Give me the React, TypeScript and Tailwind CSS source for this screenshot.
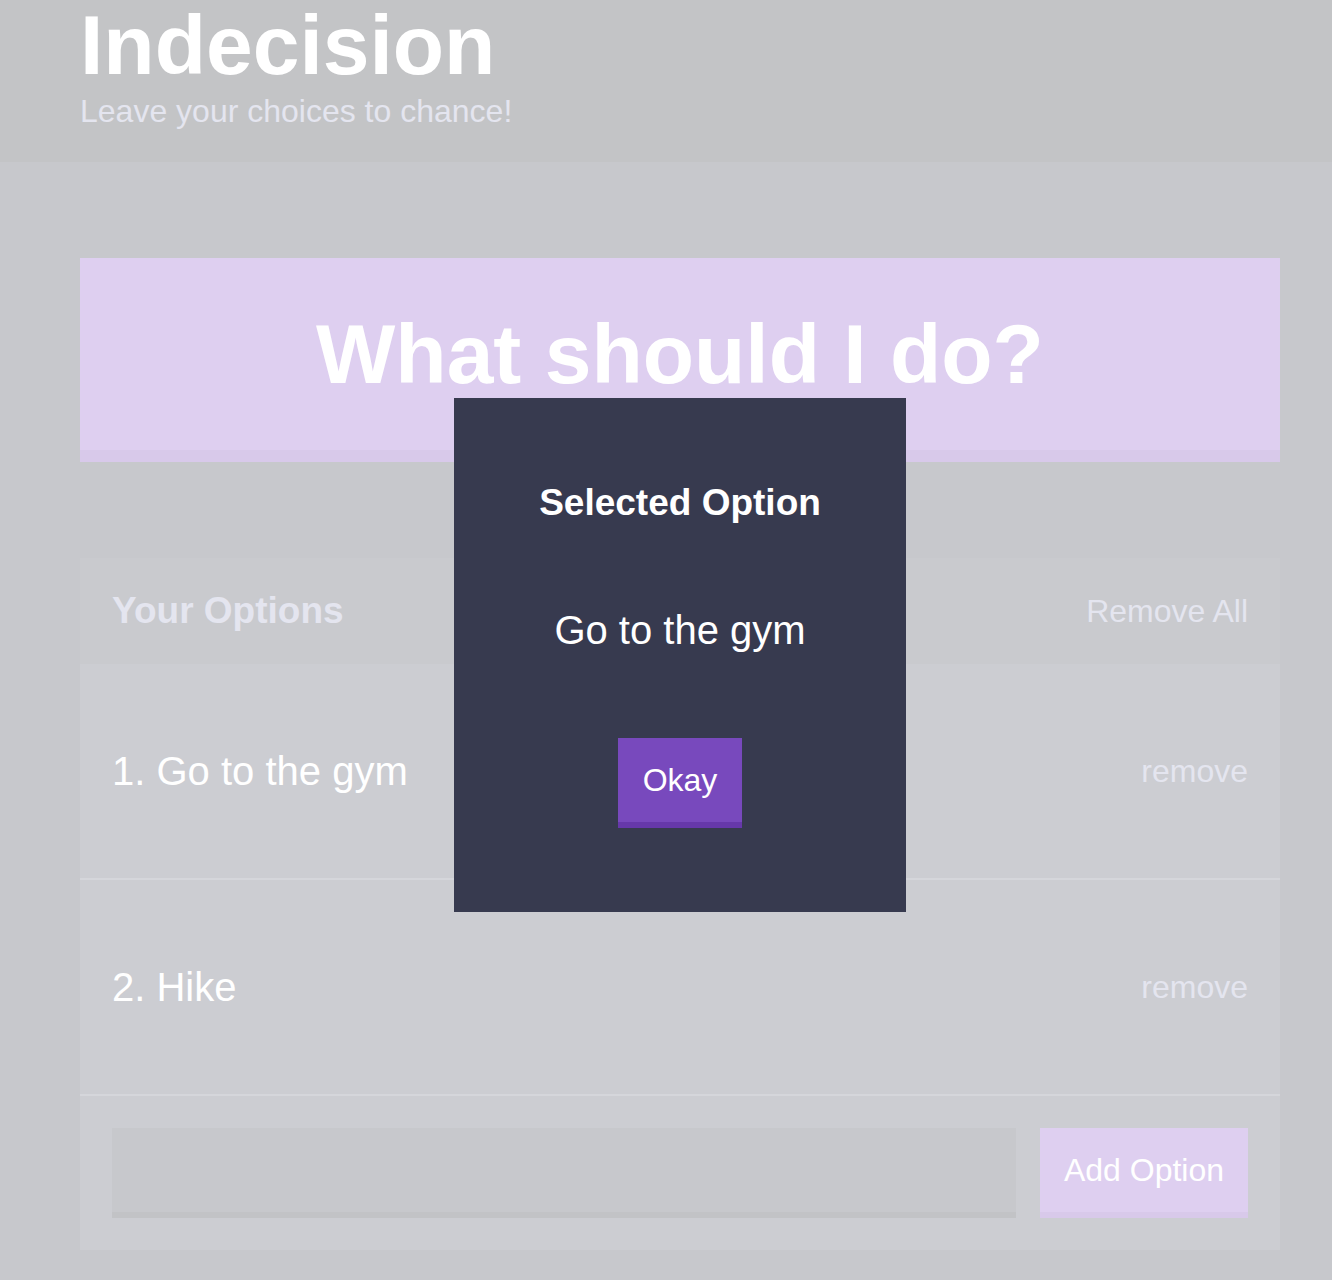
import React from "react";

export default function App() {
  return (
    <div className="relative min-h-[1280px] bg-[#c7c8cc] font-['Liberation_Sans',Arial,Helvetica,sans-serif]">
      <header className="h-[162px] bg-[#c3c4c6] px-[80px] pt-[3px]">
        <h1 className="text-[84px] leading-[84px] font-bold text-white">Indecision</h1>
        <h2 className="mt-[8px] text-[32px] leading-[32px] text-[#e4e5ef]">Leave your choices to chance!</h2>
      </header>
      <main className="ml-[80px] w-[1200px] pt-[96px]">
        <button className="block w-full h-[204px] bg-[#decff0] border-b-[12px] border-[#d8c9ea] text-white text-[84px] leading-[84px] font-bold">
          What should I do?
        </button>
        <div className="mt-[96px] bg-[#cccdd2]">
          <div className="h-[106px] bg-[#c9cace] flex items-center justify-between px-[32px]">
            <h3 className="text-[37px] font-bold text-[#e4e5ef]">Your Options</h3>
            <button className="text-[32px] text-[#e4e5ef]">Remove All</button>
          </div>
          <div className="h-[216px] border-b-[2px] border-[#d5d6db] flex items-center justify-between px-[32px]">
            <p className="text-[40px] text-white">1. Go to the gym</p>
            <button className="text-[32px] text-[#e4e5ef]">remove</button>
          </div>
          <div className="h-[216px] border-b-[2px] border-[#d5d6db] flex items-center justify-between px-[32px]">
            <p className="text-[40px] text-white">2. Hike</p>
            <button className="text-[32px] text-[#e4e5ef]">remove</button>
          </div>
          <form className="flex gap-[24px] p-[32px]">
            <input className="flex-1 h-[90px] bg-[#c7c8cc] border-b-[6px] border-[#c2c3c6] outline-none" />
            <button type="button" className="w-[208px] h-[90px] bg-[#decff0] border-b-[6px] border-[#d8c9ea] text-white text-[32px]">
              Add Option
            </button>
          </form>
        </div>
      </main>
      <div className="absolute left-[454px] top-[398px] w-[452px] h-[514px] bg-[#373a4f] flex flex-col items-center pt-[83px]">
        <h3 className="text-[37px] leading-[44px] font-bold text-white">Selected Option</h3>
        <p className="mt-[81px] text-[40px] leading-[48px] text-white">Go to the gym</p>
        <button className="mt-[84px] w-[124px] h-[90px] bg-[#7849bd] border-b-[6px] border-[#6638aa] text-white text-[32px]">
          Okay
        </button>
      </div>
    </div>
  );
}
